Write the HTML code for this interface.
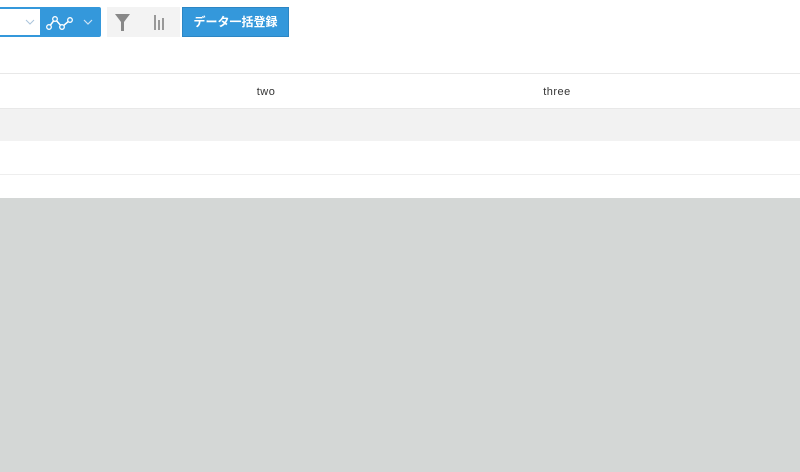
<html><head><style>
body{margin:0;width:800px;height:472px;background:#d4d7d6;font-family:"Liberation Sans","Noto Sans CJK JP",sans-serif;position:relative;overflow:hidden}
.top{position:absolute;left:0;top:0;width:800px;height:198px;background:#fff}
.a{position:absolute}
</style></head><body>
<div class="top"></div>
<div class="a" style="left:0;top:7px;width:101px;height:30px;background:#3498db;border-radius:0 2px 2px 0"></div>
<div class="a" style="left:0;top:9px;width:40px;height:26px;background:#fff"></div>
<svg class="a" style="left:0;top:7px" width="101" height="30">
<polyline points="26,13 30,17 34,13" fill="none" stroke="#aac4dc" stroke-width="1"/>
<polyline points="49,20 55,12 62,20 70,13" fill="none" stroke="#fff" stroke-width="1.5"/>
<circle cx="49" cy="20" r="2.3" fill="#3498db" stroke="#fff" stroke-width="1.3"/>
<circle cx="55" cy="12" r="2.3" fill="#3498db" stroke="#fff" stroke-width="1.3"/>
<circle cx="62" cy="20" r="2.3" fill="#3498db" stroke="#fff" stroke-width="1.3"/>
<circle cx="70" cy="13" r="2.3" fill="#3498db" stroke="#fff" stroke-width="1.3"/>
<polyline points="84,13 88,17 92,13" fill="none" stroke="#cfe3f5" stroke-width="1.2"/>
</svg>
<div class="a" style="left:107px;top:7px;width:73px;height:30px;background:#f3f3f3"></div>
<svg class="a" style="left:107px;top:7px" width="73" height="30">
<path d="M8,7 H23 L17,15 V24 H14 V15 Z" fill="#888"/>
<rect x="47" y="8" width="2" height="15" fill="#999"/>
<rect x="51" y="13" width="2" height="10" fill="#999"/>
<rect x="55" y="11" width="2" height="12" fill="#999"/>
</svg>
<div class="a" style="left:182px;top:7px;width:107px;height:30px;background:#3498db;border:1px solid #2c86c4;box-sizing:border-box;color:#fff;font-size:12px;font-weight:bold;line-height:28px;text-align:center">データ一括登録</div>
<div class="a" style="left:0;top:73px;width:800px;height:1px;background:#e8e8e8"></div>
<div class="a" style="left:0;top:108px;width:800px;height:1px;background:#e8e8e8"></div>
<div class="a" style="left:246px;top:86px;width:40px;text-align:center;font-size:11px;color:#333;letter-spacing:0.5px">two</div>
<div class="a" style="left:532px;top:86px;width:50px;text-align:center;font-size:11px;color:#333;letter-spacing:0.5px">three</div>
<div class="a" style="left:0;top:109px;width:800px;height:32px;background:#f2f2f2"></div>
<div class="a" style="left:0;top:174px;width:800px;height:1px;background:#eee"></div>
</body></html>
